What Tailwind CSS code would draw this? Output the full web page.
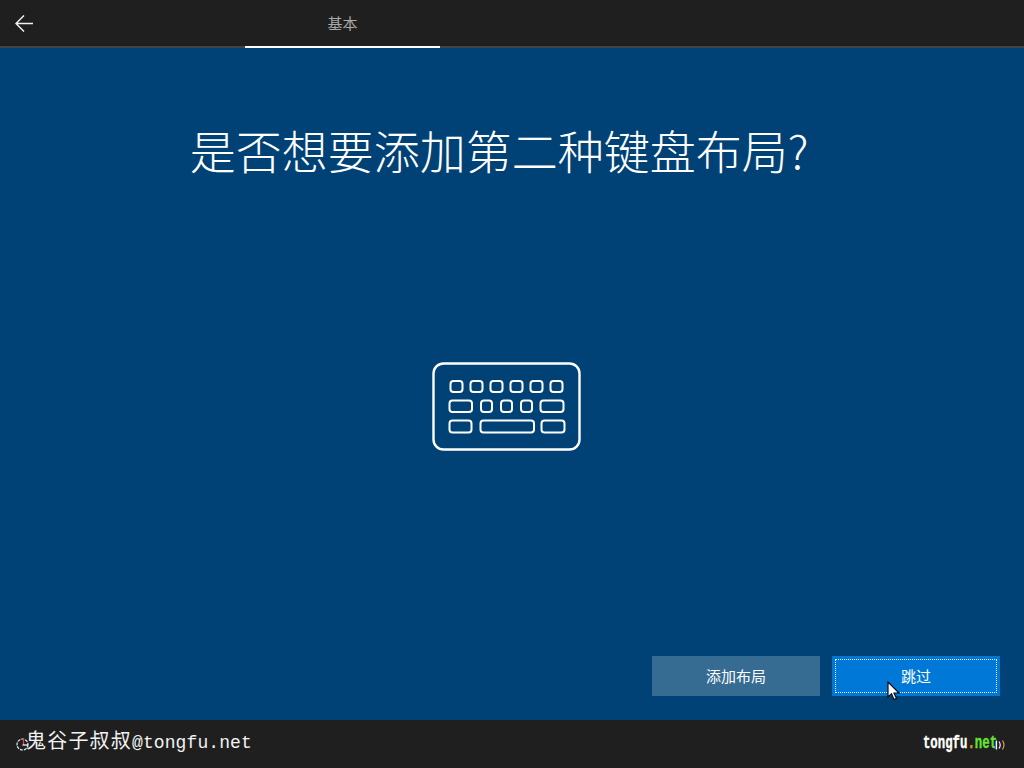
<!DOCTYPE html>
<html lang="zh-CN">
<head>
  <meta charset="UTF-8">
  <title>键盘布局</title>
  <script src="https://cdn.jsdelivr.net/npm/@tailwindcss/browser@4"></script>
</head>
<body class="w-[1024px] h-[768px] overflow-hidden flex flex-col bg-[#004275] text-white font-['Noto_Sans_CJK_SC','Noto_Sans',sans-serif]">
  <!-- top bar -->
  <header class="h-12 shrink-0 bg-[#1f1f1f] border-b-2 border-[#434343] flex">
    <div class="w-[245px] flex items-center pl-[15px] pt-[1px]">
      <svg width="18" height="17" viewBox="0 0 18 17" fill="none" stroke="#f0f0f0" stroke-width="1.5"><path d="M9 0.5 L1 8.5 L9 16.5 M1 8.5 H18"/></svg>
    </div>
    <div class="w-[195px] h-12 border-b-2 border-white flex items-center justify-center text-[15px] text-[#a8a8a8] pt-[1px]">基本</div>
  </header>

  <!-- content -->
  <main class="flex-1 flex flex-col items-center relative">
    <h1 class="mt-[69px] h-[64px] text-[46px] leading-[64px] font-light text-white whitespace-nowrap w-full text-center pr-[26px]">是否想要添加第二种键盘布局?</h1>
    <div class="mt-[181px] ml-[-10px]">
      <svg class="block" width="150" height="90" viewBox="0 0 150 90" fill="none" stroke="#fff" stroke-width="2">
        <rect x="1.5" y="1.5" width="146" height="86" rx="10" stroke-width="2.4"/>
        <rect x="18.5" y="19" width="12" height="11" rx="3"/>
        <rect x="38.5" y="19" width="12" height="11" rx="3"/>
        <rect x="58.5" y="19" width="12" height="11" rx="3"/>
        <rect x="78.5" y="19" width="12" height="11" rx="3"/>
        <rect x="98.5" y="19" width="12" height="11" rx="3"/>
        <rect x="118.5" y="19" width="12" height="11" rx="3"/>
        <rect x="17.5" y="38.5" width="22.5" height="11.5" rx="3"/>
        <rect x="49" y="38.5" width="11" height="11.5" rx="3"/>
        <rect x="69" y="38.5" width="11" height="11.5" rx="3"/>
        <rect x="89" y="38.5" width="11" height="11.5" rx="3"/>
        <rect x="108.5" y="38.5" width="23" height="11.5" rx="3"/>
        <rect x="17.5" y="58.5" width="22" height="12" rx="3"/>
        <rect x="48.5" y="58.5" width="53.5" height="12" rx="3"/>
        <rect x="109.5" y="58.5" width="23" height="12" rx="3"/>
      </svg>
    </div>
    <div class="mt-auto mb-6 self-end mr-6 flex gap-3">
      <button class="w-[168px] h-10 bg-[#366b92] text-[15px] text-white">添加布局</button>
      <button class="w-[168px] h-10 bg-[#0078d7] p-[3px] text-[15px] text-white">
        <span class="flex items-center justify-center w-full h-full border border-dotted border-white">跳过</span>
      </button>
    </div>
    <!-- mouse cursor -->
    <svg class="absolute left-[887px] top-[633px]" width="14" height="20" viewBox="0 0 14 20">
      <path d="M1 1 V16 L4.5 12.8 L7 18.5 L9.5 17.4 L7 12 H12 Z" fill="#fff" stroke="#0a0a14" stroke-width="1.2"/>
    </svg>
  </main>

  <!-- watermark strip -->
  <footer class="h-12 shrink-0 bg-[#1f1f1f] flex items-center relative pl-[26px] pr-[27px]">
    <svg class="absolute left-[16px] top-[17px]" width="14" height="14" viewBox="0 0 14 14" fill="none">
      <circle cx="6.5" cy="7.5" r="5.5" stroke="#e6ecf5" stroke-width="1.2" stroke-dasharray="3 1"/>
      <path d="M7.5 1 V8" stroke="#e8404a" stroke-width="1.2"/>
      <path d="M6.5 8 H12" stroke="#fff" stroke-width="1.2"/>
    </svg>
    <span class="relative text-[18px] leading-6 text-[#f2f2f2] font-['Liberation_Mono','Noto_Sans_CJK_SC',monospace] mt-[-3px] whitespace-nowrap"><span class="text-[20px] tracking-[1.2px]">鬼谷子叔叔</span><span class="tracking-[0.1px]">@tongfu.net</span></span>
    <span class="ml-auto mt-[-3px] text-[19px] leading-6 font-bold font-['Liberation_Mono',monospace] [-webkit-text-stroke:0.4px] whitespace-nowrap origin-right scale-x-[0.65]">tongfu<span class="text-[#e09a2b]">.</span><span class="text-[#66e22e]">net</span></span>
    <svg class="absolute left-[994px] top-[19px]" width="12" height="12" viewBox="0 0 12 12" fill="none" stroke-width="1.2">
      <path d="M2.5 1.5 V10.5" stroke="#fff"/>
      <path d="M1.4 2 V10" stroke="#3a6be0"/>
      <path d="M5 2.5 Q7.4 6 5 9.5" stroke="#f0f0f0"/>
      <path d="M8.5 1.5 Q11.4 6 8.5 10.5" stroke="#e8955a"/>
    </svg>
  </footer>
</body>
</html>
